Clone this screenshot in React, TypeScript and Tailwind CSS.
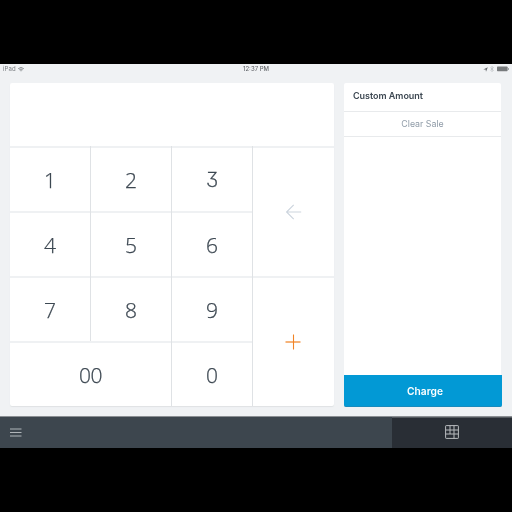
import React from 'react';

function Key({ label, className = '', glyph = '' }: { label: string; className?: string; glyph?: string }) {
  return (
    <button className={`border-r border-[#dfe2e5] ${className}`}>
      <span className="flex h-full w-full items-center justify-center border-t-2 border-[#eff1f3] pt-px text-[21px] font-light leading-none text-[#3d4852] [-webkit-text-stroke:0.25px_#3d4852]">
        <span className={glyph}>{label}</span>
      </span>
    </button>
  );
}

function StatusBar() {
  return (
    <header className="grid h-[11px] shrink-0 grid-cols-3 items-center px-[3px] pb-px font-['Inter',sans-serif] text-[6px] leading-none text-[#777b7f] will-change-transform">
      <div className="flex items-center gap-[2px]">
        <span className="tracking-[0.1px]">iPad</span>
        <svg width="6" height="5" viewBox="0 0 6 5" fill="none" stroke="#707478" strokeWidth="0.8">
          <path d="M.2 1.7Q3-.8 5.8 1.7M1.3 2.8Q3 1.2 4.7 2.8" />
          <path d="M2.1 3.6 3 4.6 3.9 3.6Q3 2.9 2.1 3.6Z" fill="#707478" stroke="none" />
        </svg>
      </div>
      <span className="text-center font-medium text-[#66696d]">12:37 PM</span>
      <div className="flex items-center justify-end gap-[2px]">
        <svg width="5" height="5" viewBox="0 0 5 5"><path d="M.3 2.4 4.8.2 3 4.8 2.6 2.5Z" fill="#65696d" /></svg>
        <svg width="4" height="6" viewBox="0 0 4 6" fill="none" stroke="#b6babd" strokeWidth="0.7"><path d="M.4 1.6 3.4 4.2 2 5.6V.4L3.4 1.8.4 4.4" /></svg>
        <svg width="13" height="6" viewBox="0 0 13 6"><rect x="1" y=".5" width="10.6" height="4.8" rx=".7" fill="#777a7c" /><rect x="11.8" y="2" width="1" height="2" fill="#909395" /></svg>
      </div>
    </header>
  );
}

export default function App() {
  return (
    <div className="flex h-[512px] w-[512px] flex-col overflow-hidden bg-black py-16 font-['Open_Sans',sans-serif]">
      <div className="flex h-[352px] flex-col bg-[#f0f2f4]">
        <StatusBar />
        <main className="flex items-start gap-[10px] pl-[10px] pt-[8px]">
          <section className="w-[324px] overflow-hidden rounded-[2px] bg-white shadow-[0_1px_1px_#dfe2e4] will-change-transform">
            <div className="h-[63px]" />
            <div className="grid grid-cols-[81px_81px_81px_81px] grid-rows-[65px_65px_65px_65px]">
              <Key label="1" />
              <Key label="2" />
              <Key label="3" glyph="font-['Inter',sans-serif] font-extralight text-[20.5px] pt-px [font-feature-settings:'cv09'] [-webkit-text-stroke:0.4px_#3d4852]" />
              <button aria-label="Backspace" className="row-span-2 flex items-center justify-center border-t-2 border-[#eff1f3]">
                <svg width="16" height="16" viewBox="0 0 16 16" fill="none" stroke="#cdd5de" strokeWidth="1.2"><path d="M15.2 8H.7M7.7.8.6 8l7.1 7.2" /></svg>
              </button>
              <Key label="4" />
              <Key label="5" />
              <Key label="6" />
              <Key label="7" />
              <Key label="8" />
              <Key label="9" />
              <button aria-label="Add" className="row-span-2 flex items-center justify-center border-t-2 border-[#eff1f3] pr-px">
                <svg width="16" height="16" viewBox="0 0 16 16" fill="none"><path d="M.5 7.9h15" stroke="#f39a4d" strokeWidth="1.5" /><path d="M8.5 .5v15" stroke="#f18325" strokeWidth="1.1" /></svg>
              </button>
              <Key label="00" className="col-span-2" glyph="tracking-[-0.5px]" />
              <Key label="0" />
            </div>
          </section>
          <aside className="flex h-[324px] w-[158px] flex-col will-change-transform">
            <div className="mr-px flex-1 rounded-t-[2px] bg-white font-['Inter',sans-serif] text-[9px]">
              <h1 className="flex h-7 items-center pb-[3px] pl-[9px] font-semibold tracking-[-0.03px] text-[#3d4852]">Custom Amount</h1>
              <button className="h-[26px] w-full border-y border-[#e8eaec] text-[8.8px] text-[#8f9ba7]">Clear Sale</button>
            </div>
            <button className="h-8 rounded-b-[2px] border-b border-[#188bbd] bg-[#0299d5] pl-[4px] pt-px font-['Inter',sans-serif] text-[10.2px] font-semibold leading-none text-white">Charge</button>
          </aside>
        </main>
      </div>
      <footer className="flex h-8 border-t border-[#8b8f93] bg-[#3d464e]">
        <button aria-label="Menu" className="flex w-[392px] items-center pl-[10px]">
          <svg width="12" height="9" viewBox="0 0 12 9" fill="#b0b5b9"><path d="M0 .5h11.5v1H0zM0 4h11.5v1H0zM0 7.5h11.5v1H0z" /></svg>
        </button>
        <button aria-label="Keypad" className="flex flex-1 items-center justify-center border-t border-[#555a60] bg-[#292e35] pb-[2px]">
          <svg width="14" height="14" viewBox="0 0 14 14" fill="none" stroke="#b8bbbe"><rect x=".6" y=".6" width="12.8" height="12.8" rx=".6" /><path d="M.5 5h13M.5 9h13M5 .5V9M9 .5v13" /></svg>
        </button>
      </footer>
    </div>
  );
}
